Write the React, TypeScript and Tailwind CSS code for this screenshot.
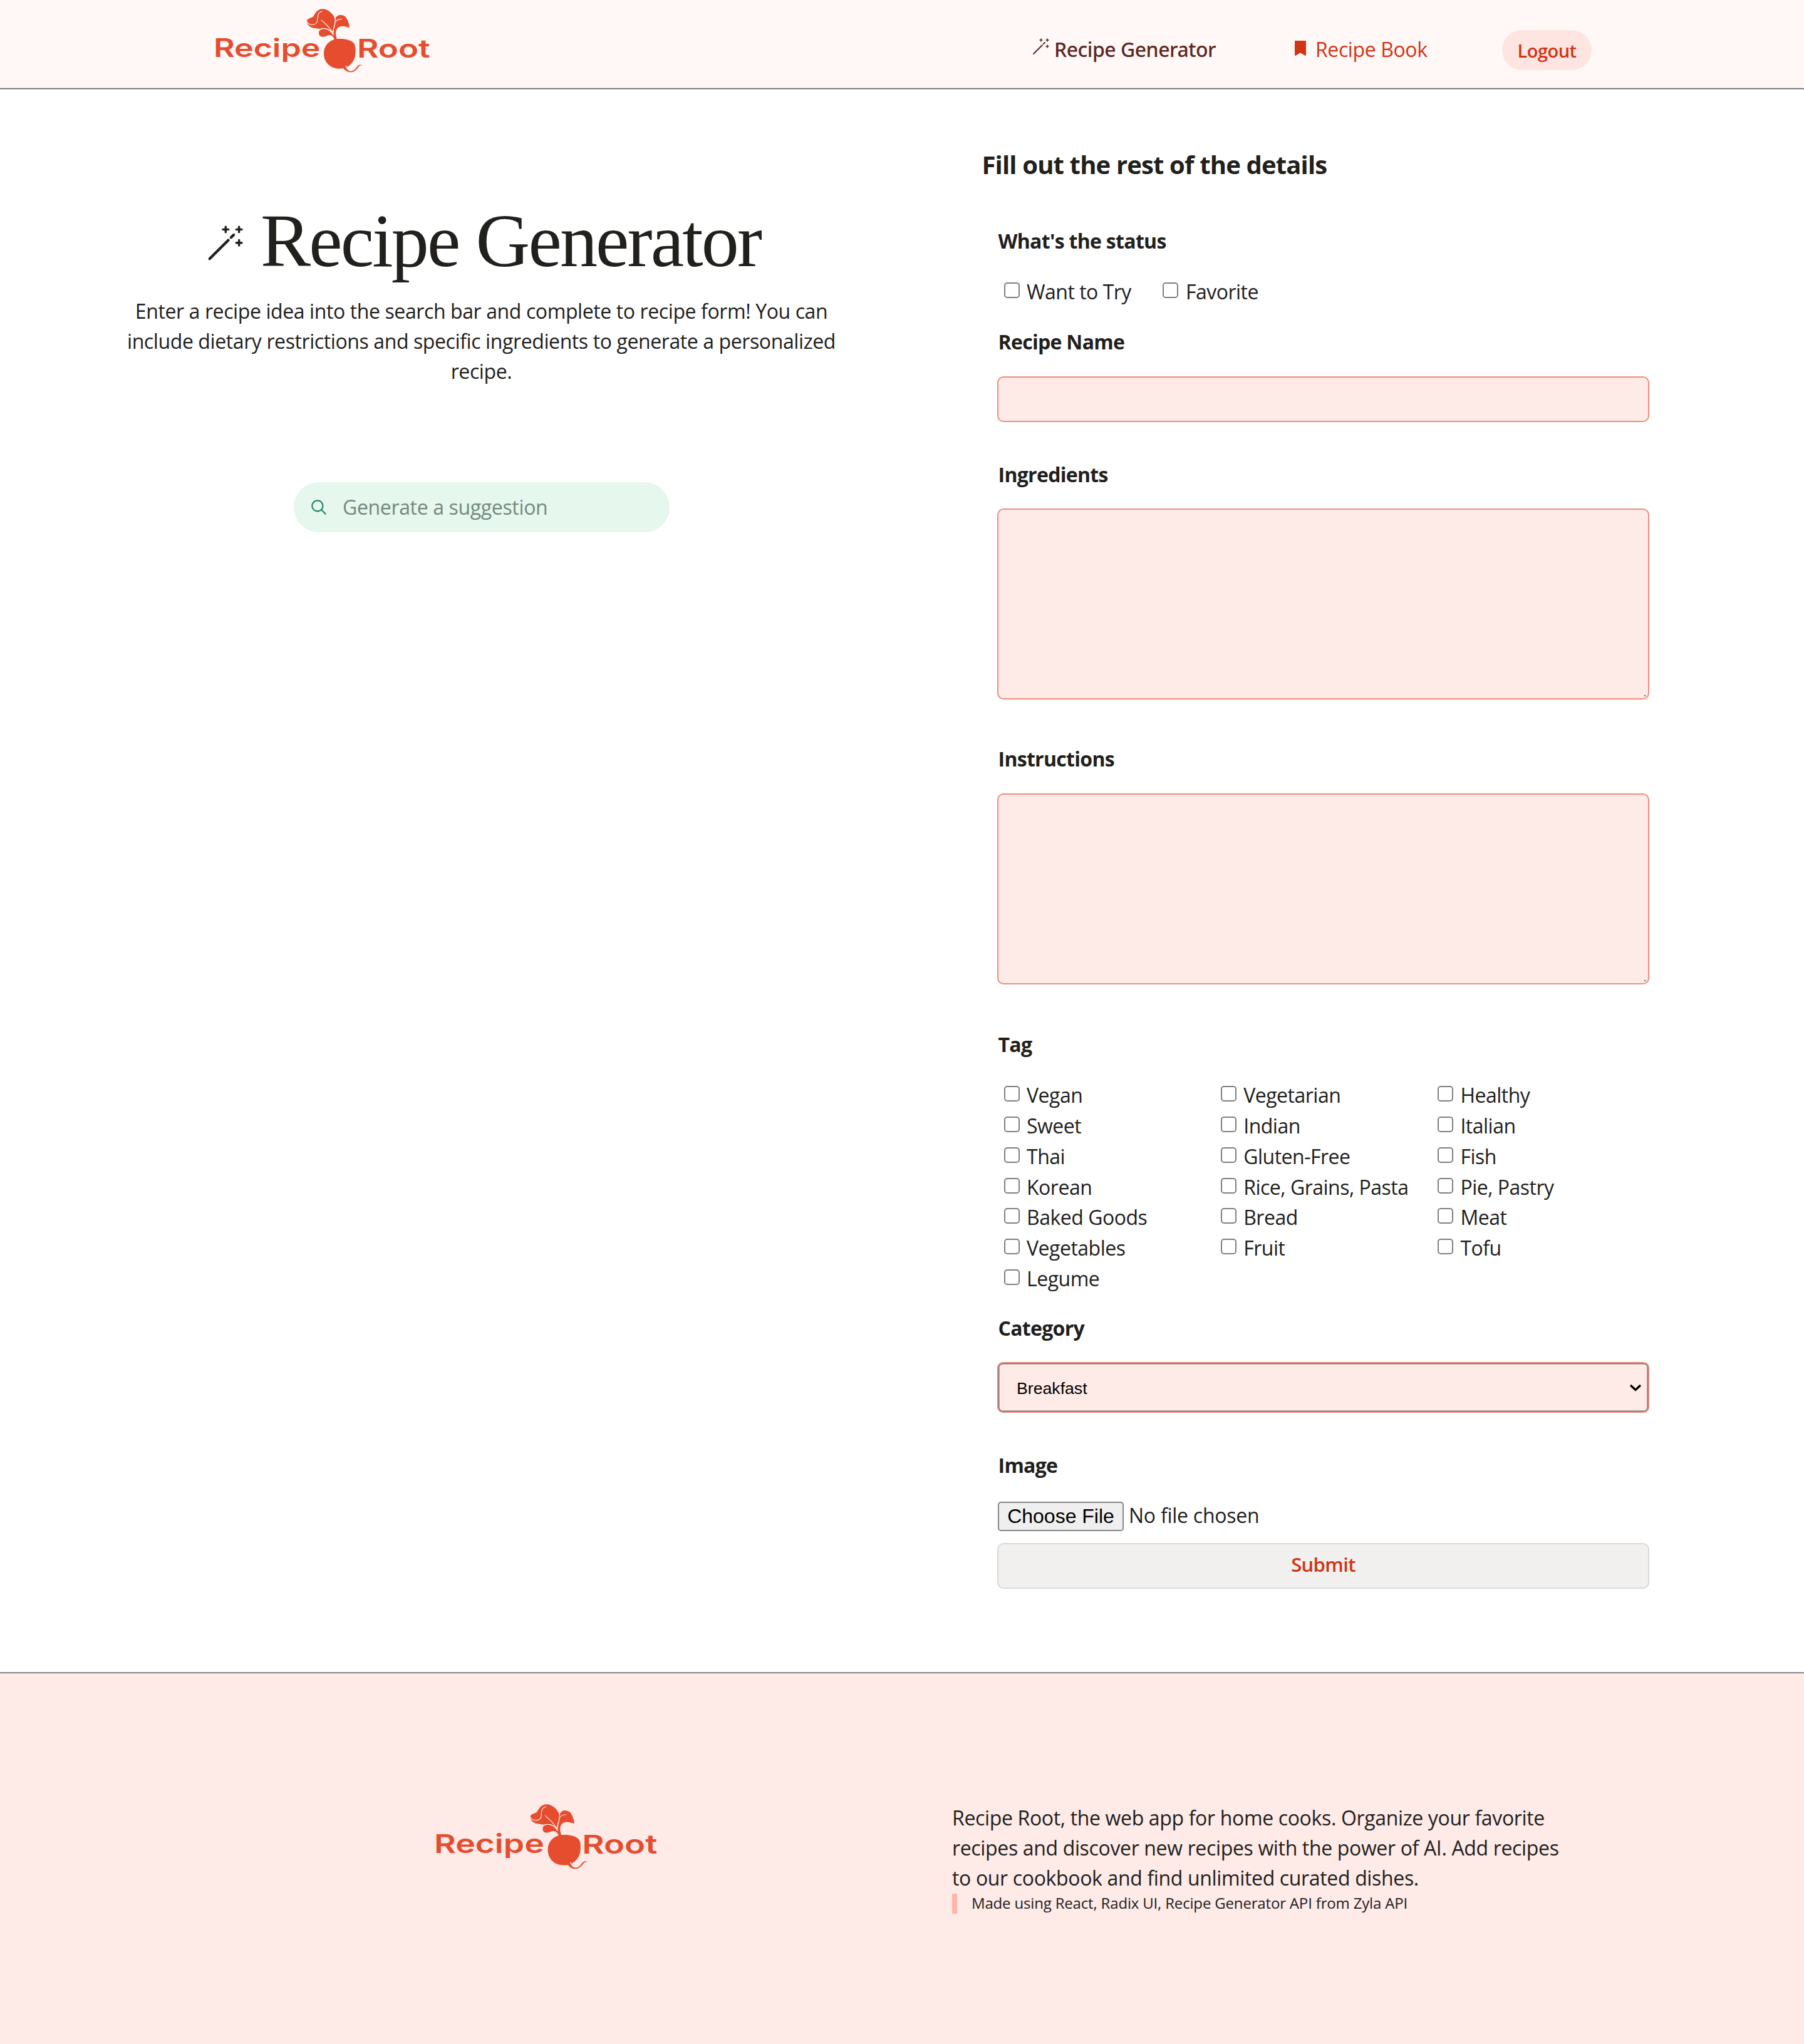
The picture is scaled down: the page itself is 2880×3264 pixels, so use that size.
import { RxBookmarkFilled, RxMagicWand, RxMagnifyingGlass } from "react-icons/rx";

const TAGS = [
  "Vegan", "Vegetarian", "Healthy",
  "Sweet", "Indian", "Italian",
  "Thai", "Gluten-Free", "Fish",
  "Korean", "Rice, Grains, Pasta", "Pie, Pastry",
  "Baked Goods", "Bread", "Meat",
  "Vegetables", "Fruit", "Tofu",
  "Legume",
];

function Logo({ className, gap }: { className: string; gap: string }) {
  return (
    <svg viewBox="55 42 1065 305" preserveAspectRatio="none" className={`shrink-0 ${className}`} fill="#e54d2e">
      <g fontFamily="Inter, sans-serif" fontWeight={600} fontSize={122}>
        <text x="64" y="272" textLength="511" lengthAdjust="spacingAndGlyphs">Recipe</text>
        <text x="751" y="275" textLength="350" lengthAdjust="spacingAndGlyphs">Root</text>
      </g>
      <g transform="translate(480 0)">
        <path d="M165 187C205 182 245 190 256 207C266 222 265 245 263 262C260 288 245 307 224 320L218 324C208 327 197 328 184 328C140 327 112 295 112 256C112 218 135 197 165 187Z" />
        <path d="M203 324C214 338 226 346 243 345C262 343 271 328 280 317C284 312 289 313 294 313V310C284 309 279 309 274 315C264 327 258 339 242 340C230 340 224 333 218 323Z" />
        <path d="M168 100C165 86 172 78 183 73C198 69 217 75 222 90C228 101 236 118 234 133C224 130 215 126 205 126C187 125 174 132 170 150C168 163 170 175 176 189H162C158 172 157 160 160 142C164 125 168 112 168 100Z" />
        <path d="M88 157C88 143 101 137 119 139C136 141 150 152 158 166L168 188H163C158 176 149 167 137 168C127 169 118 176 105 176C94 175 88 167 88 157Z" />
        <path d="M35 92C45 86 58 83 62 78C70 64 80 46 102 43C130 42 150 62 160 78C168 92 167 108 163 120C158 135 155 145 156 153C148 148 135 138 122 136C108 135 98 139 90 138C70 134 50 136 38 120C31 112 28 98 35 92Z" />
        <g fill="none" stroke={gap} strokeWidth={3.2} strokeLinecap="round">
          <path d="M104 54C78 60 84 85 81 100C78 115 66 118 55 118C45 117 36 112 31 103" />
          <path d="M100 96L118 112C132 125 145 140 154 156" />
          <path d="M92 140C120 130 145 142 157 167" />
          <path d="M155 154C157 130 170 115 166 88" />
          <path d="M168 104C174 95 184 91 197 91" />
          <path d="M218 313C217 317 219 320 222 321" />
        </g>
      </g>
    </svg>
  );
}

function Label({ className, children }: { className: string; children: string }) {
  return (
    <h3 className={`pl-[1.5px] text-[32px] leading-[48px] font-bold tracking-[-0.7px] ${className}`}>{children}</h3>
  );
}

function Check({ label }: { label: string }) {
  return (
    <label className="flex items-start pl-[10.5px]">
      <input
        type="checkbox"
        className="mt-[10px] size-[25px] shrink-0 appearance-none rounded-[5px] border-2 border-[#7f7f7f] bg-white"
      />
      <span className="mt-px ml-[11.5px] whitespace-nowrap tracking-[-0.5px]">{label}</span>
    </label>
  );
}

function TextBox({ className }: { className: string }) {
  return (
    <div className={`relative w-[1041px] ${className}`}>
      <textarea className="block size-full resize-none rounded-[10px] border-2 border-[#ee8e7c] bg-[#feeae7]" />
      <span className="absolute right-[6px] bottom-[5px] size-[2px] bg-[#5f5a5a]" />
    </div>
  );
}

export default function App() {
  return (
    <div className="w-[2880px] bg-white font-['Open_Sans','Noto_Sans',sans-serif] text-[32px] leading-[48px] text-[#21201c]">
      <header className="flex h-[140px] items-start bg-[#fff8f7] pl-[338px] text-[#d13415]">
        <Logo className="mt-[14px] h-[102px] w-[355px]" gap="#fff8f7" />
        <nav className="ml-[952px] flex items-start">
          <a className="mt-[54px] flex w-[416px] items-start font-['Noto_Sans'] font-medium tracking-[-0.5px] text-[#5c271f]">
            <RxMagicWand className="mt-[7px] size-[30px]" />
            <span className="mt-px ml-[8px]">Recipe Generator</span>
          </a>
          <a className="mt-[54px] flex w-[337px] items-start tracking-[-0.4px]">
            <RxBookmarkFilled className="mt-[7px] size-[30px]" />
            <span className="mt-px ml-[9px]">Recipe Book</span>
          </a>
          <button className="mt-[48px] h-[64px] w-[143px] rounded-[32px] bg-[#fee5e1] pt-px text-[29px] font-semibold tracking-[-0.5px]">
            Logout
          </button>
        </nav>
      </header>
      <div className="h-[3px] border-y border-t-[#d5d0cf] border-b-[#b9b9b9] bg-[#666262]" />

      <main className="flex h-[2527px]">
        <section className="w-[1537px] pt-[181px]">
          <div className="flex items-start pl-[324px]">
            <RxMagicWand className="mt-[36px] size-[64px]" />
            <h1 className="mt-px ml-[28px] font-['Liberation_Serif',serif] text-[120px] leading-[120px] tracking-[-2.8px]">
              Recipe Generator
            </h1>
          </div>
          <p className="mt-[28px] text-center tracking-[-0.4px]">
            Enter a recipe idea into the search bar and complete to recipe form! You can
            <br />
            include dietary restrictions and specific ingredients to generate a personalized
            <br />
            recipe.
          </p>
          <div className="mt-[153px] ml-[469px] flex h-[80px] w-[600px] items-center rounded-[40px] bg-[#e6f7ed] pl-[24px]">
            <RxMagnifyingGlass className="size-[32px] text-[#208368]" />
            <span className="ml-[22px] tracking-[-0.35px] text-[#72897f]">Generate a suggestion</span>
          </div>
        </section>

        <section className="pt-[90px]">
          <h2 className="ml-[30.5px] text-[40px] leading-[60px] font-bold tracking-[-0.85px]">
            Fill out the rest of the details
          </h2>
          <form className="ml-[55px] flex w-[1041px] flex-col">
            <Label className="mt-[68px]">What's the status</Label>
            <div className="mt-[32px] flex h-[48px] gap-[40px]">
              <Check label="Want to Try" />
              <Check label="Favorite" />
            </div>
            <Label className="mt-[33px]">Recipe Name</Label>
            <input className="mt-[31px] h-[73px] rounded-[10px] border-2 border-[#ee8e7c] bg-[#feeae7]" />
            <Label className="mt-[60px]">Ingredients</Label>
            <TextBox className="mt-[30px] h-[305px]" />
            <Label className="mt-[71px]">Instructions</Label>
            <TextBox className="mt-[31px] h-[305px]" />
            <Label className="mt-[72px]">Tag</Label>
            <div className="mt-[32px] grid h-[342px] grid-cols-[repeat(3,346.2px)] grid-rows-[repeat(7,48.86px)]">
              {TAGS.map((tag) => (
                <Check key={tag} label={tag} />
              ))}
            </div>
            <Label className="mt-[31px]">Category</Label>
            <div className="mt-[30px] flex h-[81px] items-center justify-between rounded-[9px] border-2 border-[#e3897a] bg-[#feeae7] pr-[10px] pl-[29px] font-['Liberation_Sans',sans-serif] text-[26.67px] text-black shadow-[inset_0_0_0_1.5px_#7d7371]">
              <span className="mt-[2px]">Breakfast</span>
              <svg viewBox="0 0 20 12" className="mt-px h-[12px] w-[20px]" fill="none" stroke="#000" strokeWidth={3.2}>
                <path d="M2 2L10 9.5L18 2" />
              </svg>
            </div>
            <Label className="mt-[60px]">Image</Label>
            <div className="mt-[34px] flex h-[47px] items-center pl-px">
              <button className="h-[47px] w-[201px] rounded-[5px] border-2 border-[#868686] bg-[#efefef] pb-px font-['Liberation_Sans',sans-serif] leading-[40px] text-black">
                Choose File
              </button>
              <span className="-mt-[3px] ml-[8px] tracking-[-0.25px]">No file chosen</span>
            </div>
            <button className="mt-[19px] h-[73px] rounded-[10px] border-2 border-[#dad9d6] bg-[#f1f0ef] pb-[6px] text-[31px] font-semibold tracking-[-0.65px] text-[#d13415]">
              Submit
            </button>
          </form>
        </section>
      </main>

      <footer className="h-[594px] border-t border-[#a3a3a3] bg-[#feeae7]">
        <div className="h-px bg-[#6f6a6a]" />
        <div className="flex items-start pl-[690px]">
          <Logo className="mt-[209px] h-[104px] w-[366px]" gap="#feeae7" />
          <div className="mt-[207px] ml-[463px]">
            <p className="pl-px tracking-[-0.35px]">
              Recipe Root, the web app for home cooks. Organize your favorite
              <br />
              recipes and discover new recipes with the power of AI. Add recipes
              <br />
              to our cookbook and find unlimited curated dishes.
            </p>
            <blockquote className="mt-px ml-px h-[32px] border-l-8 border-[#fdb5a5] pl-[23px] text-[24px] leading-[30px] tracking-[-0.17px]">
              Made using React, Radix UI, Recipe Generator API from Zyla API
            </blockquote>
          </div>
        </div>
      </footer>
    </div>
  );
}
